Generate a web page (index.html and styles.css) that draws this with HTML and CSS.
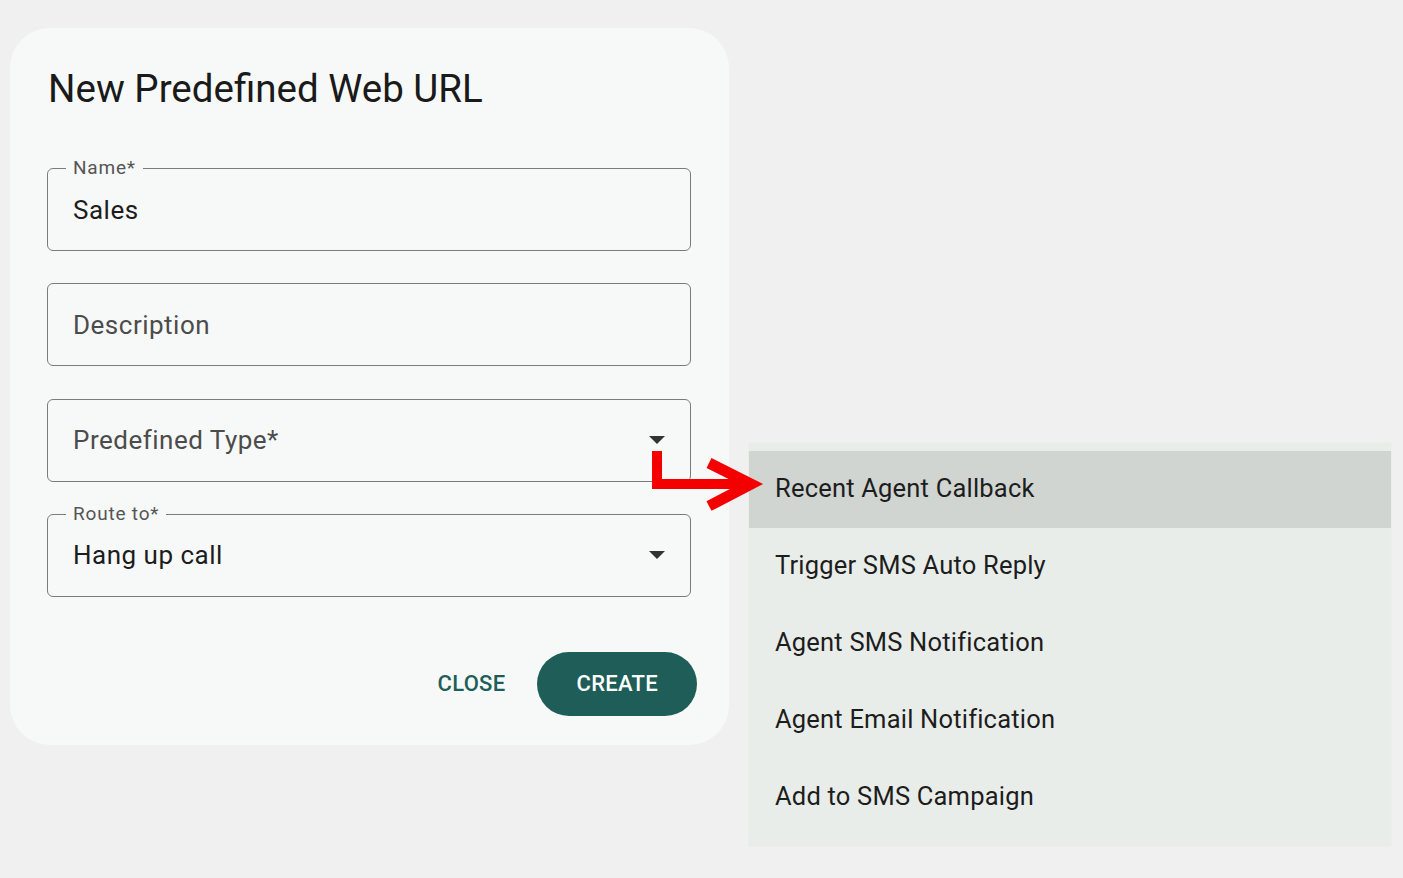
FILE: index.html
```html
<!DOCTYPE html>
<html lang="en">
  <head>
    <meta charset="UTF-8" />
    <meta name="viewport" content="width=device-width, initial-scale=1.0" />
    <title>New Predefined Web URL</title>
    <link rel="stylesheet" href="styles.css">
  </head>
  <body>
    <div class="screen">
      <section class="dialog">
        <h2 class="dialog-title">New Predefined Web URL</h2>
        <div class="fields">
          <div class="field">
            <span class="field-label">Name*</span>
            <span class="field-value">Sales</span>
          </div>
          <div class="field">
            <span class="field-placeholder">Description</span>
          </div>
          <div class="field select">
            <span class="field-placeholder">Predefined Type*</span>
            <span class="caret"></span>
          </div>
          <div class="field select">
            <span class="field-label">Route to*</span>
            <span class="field-value">Hang up call</span>
            <span class="caret"></span>
          </div>
        </div>
        <div class="actions">
          <button class="btn-text">CLOSE</button>
          <button class="btn-filled">CREATE</button>
        </div>
      </section>

      <ul class="menu">
        <li class="menu-item active">Recent Agent Callback</li>
        <li class="menu-item">Trigger SMS Auto Reply</li>
        <li class="menu-item">Agent SMS Notification</li>
        <li class="menu-item">Agent Email Notification</li>
        <li class="menu-item">Add to SMS Campaign</li>
      </ul>

      <svg class="pointer" width="130" height="75" viewBox="0 0 130 75">
        <path d="M12 6 V39 H106" fill="none" stroke="#f40000" stroke-width="10" stroke-linejoin="miter" />
        <path d="M64 18 L106 39 L64 61" fill="none" stroke="#f40000" stroke-width="11" stroke-linejoin="miter" stroke-miterlimit="6" />
      </svg>
    </div>
  </body>
</html>
```

FILE: styles.css
```css
* {
  margin: 0;
  padding: 0;
  box-sizing: border-box;
}

body {
  background-color: #f0f0f0;
  font-family: Roboto, "Liberation Sans", sans-serif;
  color: #1d1d1d;
}

.screen {
  position: relative;
  display: flex;
  align-items: flex-start;
  gap: 20px;
  padding: 28px 0 0 10px;
  min-height: 878px;
}

.dialog {
  width: 719px;
  padding: 39px 38px 29px 37px;
  background-color: #f7f9f8;
  border-radius: 40px;
}

.dialog-title {
  font-size: 38.5px;
  font-weight: 400;
  line-height: 44px;
  color: #1a1a1a;
  padding-left: 1px;
  margin-bottom: 57px;
}

.fields {
  display: flex;
  flex-direction: column;
  gap: 32.3px;
}

.field {
  position: relative;
  display: flex;
  align-items: center;
  height: 83px;
  padding: 0 25px;
  border: 1px solid #7b7b7b;
  border-radius: 6px;
  font-size: 26px;
  letter-spacing: 0.5px;
}

.field-label {
  position: absolute;
  top: -12px;
  left: 18px;
  padding: 0 7px;
  background-color: #f7f9f8;
  font-size: 19px;
  line-height: 22px;
  letter-spacing: 0.8px;
  color: #555;
}

.field-value {
  color: #1d1d1d;
}

.field-placeholder {
  color: #4c4c4c;
}

.select {
  justify-content: space-between;
  padding-right: 25px;
}

.caret {
  width: 0;
  height: 0;
  border-left: 8px solid transparent;
  border-right: 8px solid transparent;
  border-top: 8px solid #333;
}

.actions {
  display: flex;
  justify-content: flex-end;
  align-items: center;
  gap: 16px;
  margin-top: 55px;
  margin-right: -6px;
}

.btn-text,
.btn-filled {
  border: none;
  font-family: Roboto, "Liberation Sans", sans-serif;
  font-size: 22px;
  font-weight: 500;
  letter-spacing: 0.3px;
  cursor: pointer;
}

.btn-text {
  background: none;
  color: #1f5e58;
  padding: 8px 16px;
}

.btn-filled {
  height: 64px;
  padding: 0 39px;
  border-radius: 32px;
  background-color: #1f5e58;
  color: #fff;
}

.menu {
  list-style: none;
  width: 642px;
  margin-top: 415px;
  padding: 8px 0 10px;
  background-color: #e9edea;
  box-shadow: 0 0 2px rgba(0, 0, 0, 0.04);
}

.menu-item {
  height: 77px;
  display: flex;
  align-items: center;
  padding: 0 0 4px 26px;
  font-size: 25.5px;
  letter-spacing: 0.2px;
  color: #1d1d1d;
}

.menu-item.active {
  background-color: #d0d5d2;
}

.pointer {
  position: absolute;
  left: 645px;
  top: 445px;
}
```
